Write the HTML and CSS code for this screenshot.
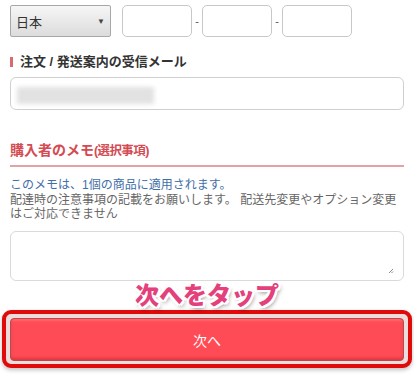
FILE: index.html
```html
<!DOCTYPE html>
<html lang="ja">
<head>
<meta charset="utf-8">
<link rel="stylesheet" href="styles.css">
</head>
<body>
<div class="page">
  <div class="phone-row">
    <div class="select"><span class="sel-text">日本</span><span class="arrow">▼</span></div>
    <div class="inp"></div><span class="dash">-</span><div class="inp"></div><span class="dash">-</span><div class="inp"></div>
  </div>
  <div class="label"><span class="bar"></span>注文 / 発送案内の受信メール</div>
  <div class="email"><span class="blur"></span></div>
  <h2 class="memo-head">購入者のメモ<span class="paren">(選択事項)</span></h2>
  <p class="note"><span class="blue">このメモは、1個の商品に適用されます。</span><br>配達時の注意事項の記載をお願いします。 配送先変更やオプション変更はご対応できません</p>
  <div class="textarea">
    <svg class="grip" width="6" height="6" viewBox="0 0 6 6"><path d="M5 1 L1 5 M5 3.5 L3.5 5" stroke="#888" stroke-width="1"/></svg>
  </div>
  <div class="tap">次へをタップ</div>
  <div class="frame"><button class="next">次へ</button></div>
</div>
</body>
</html>
```
FILE: styles.css
```css
* { box-sizing: border-box; }
html, body { margin: 0; padding: 0; background: #fff; }
body {
  width: 414px;
  height: 385px;
  overflow: hidden;
  font-family: "Liberation Sans", "Noto Sans CJK JP", sans-serif;
  color: #555;
}
.page { padding: 0 10px; }

.phone-row {
  margin-top: 5px;
  height: 32px;
  display: flex;
  align-items: stretch;
}
.select {
  width: 101px;
  border: 1px solid #a8a8a8;
  border-radius: 2px;
  background: linear-gradient(#f6f6f6, #dcdcdc);
  display: flex;
  align-items: center;
  justify-content: space-between;
  padding: 0 5px 0 5px;
  margin-right: 11px;
}
.sel-text { font-size: 13px; color: #333; }
.arrow { font-size: 8px; color: #444; }
.inp {
  width: 70px;
  border: 1px solid #c8c8c8;
  border-radius: 5px;
  background: #fff;
}
.dash {
  width: 10px;
  text-align: center;
  font-size: 11px;
  color: #555;
  display: flex;
  align-items: center;
  justify-content: center;
}

.label {
  margin-top: 18px;
  height: 14px;
  line-height: 14px;
  font-size: 13px;
  font-weight: bold;
  color: #333;
  display: flex;
  align-items: center;
}
.bar {
  width: 3px;
  height: 10px;
  background: #d66b70;
  margin-right: 7px;
}
.email {
  margin-top: 8px;
  height: 33px;
  border: 1px solid #cfcfcf;
  border-radius: 6px;
  padding: 9px 0 0 6px;
}
.blur {
  display: block;
  width: 137px;
  height: 17px;
  background: #e2e2e2;
  filter: blur(2px);
}

.memo-head {
  margin: 30px 0 0;
  font-size: 14px;
  line-height: 20px;
  font-weight: bold;
  color: #d44b53;
  padding-bottom: 4px;
  border-bottom: 2px solid #e3a2a6;
}
.paren { font-size: 12.5px; letter-spacing: -0.6px; }
.note {
  margin: 11px 0 0;
  font-size: 12px;
  line-height: 14.7px;
  color: #666;
}
.blue { color: #3f6fa8; }
.textarea {
  margin-top: 9px;
  height: 50px;
  border: 1px solid #dadada;
  border-radius: 6px;
  position: relative;
}
.grip { position: absolute; right: 9px; bottom: 6px; }

.tap {
  margin-top: 2px;
  text-align: center;
  font-size: 24px;
  line-height: 25px;
  font-weight: 900;
  color: #e4407c;
  text-shadow:
    -2px 0 0 #fff, 2px 0 0 #fff, 0 -2px 0 #fff, 0 2px 0 #fff,
    -2px -2px 0 #fff, 2px -2px 0 #fff, -2px 2px 0 #fff, 2px 2px 0 #fff,
    2px 3px 4px rgba(0,0,0,0.45);
}
.frame {
  margin: 2px -8px 0;
  height: 58px;
  border: 4px solid #e00a0a;
  border-radius: 9px;
  background: #ecdcdc;
  padding: 4px 4px 3px;
  box-shadow: 0 2px 4px rgba(0,0,0,0.25);
}
.next {
  display: block;
  width: 100%;
  height: 43px;
  border: 1px solid #b9474c;
  border-radius: 4px;
  background: #ff4b55;
  box-shadow: inset 0 -2px 3px rgba(120,0,0,0.25), inset 0 2px 2px rgba(255,255,255,0.15);
  color: #fff;
  font-family: "Liberation Sans", "Noto Sans CJK JP", sans-serif;
  font-size: 14px;
  font-weight: normal;
  padding: 0;
}
```
